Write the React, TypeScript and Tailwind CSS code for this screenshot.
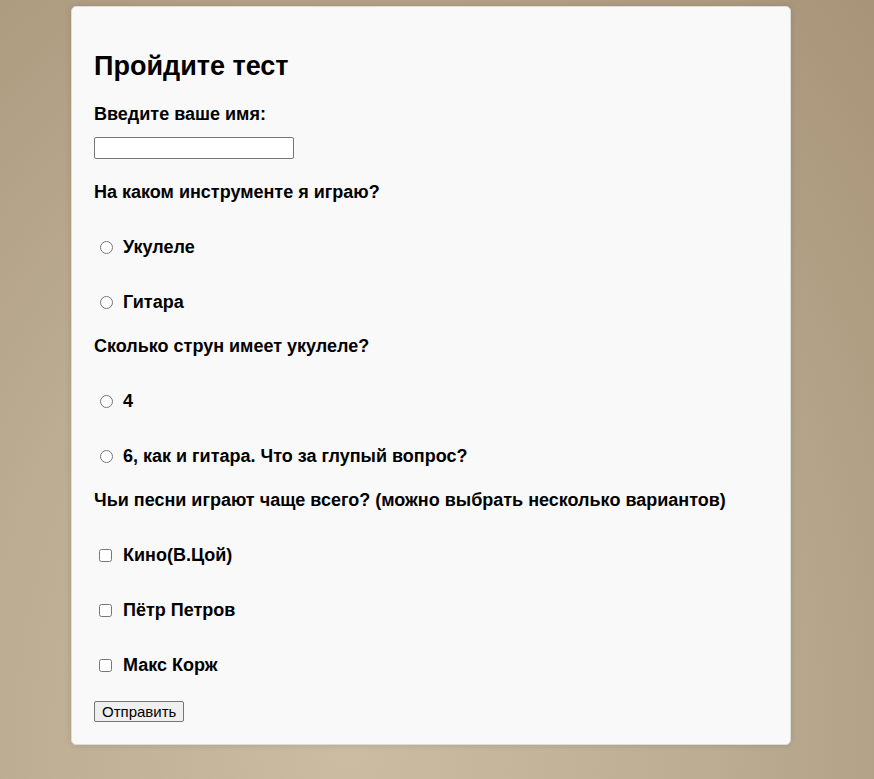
import { useState } from 'react';

interface Option {
  id: string;
  label: string;
}

const instruments: Option[] = [
  { id: 'ukulele', label: 'Укулеле' },
  { id: 'guitar', label: 'Гитара' },
];

const strings: Option[] = [
  { id: 'four', label: '4' },
  { id: 'six', label: '6, как и гитара. Что за глупый вопрос?' },
];

const artists: Option[] = [
  { id: 'kino', label: 'Кино(В.Цой)' },
  { id: 'petrov', label: 'Пётр Петров' },
  { id: 'korzh', label: 'Макс Корж' },
];

export default function App() {
  const [name, setName] = useState('');

  return (
    <div
      className="min-h-screen w-full pt-[6px] pb-[34px] bg-[radial-gradient(ellipse_at_40%_95%,#cbbca2_0%,#bbac92_50%,#a89478_100%)]"
      style={{ fontFamily: '"Liberation Sans", Arial, sans-serif' }}
    >
      <form
        className="ml-[71px] w-[720px] rounded-[5px] border border-[#dcdcdc] bg-[#f9f9f9] pl-[22px] pr-[23px] pt-[45px] pb-[22px] text-black shadow-[0_0_6px_rgba(0,0,0,0.12)]"
        onSubmit={(e) => e.preventDefault()}
      >
        <h2 className="text-[27px] font-bold leading-[28px]">Пройдите тест</h2>

        <label htmlFor="name" className="mt-[24px] block text-[18px] font-bold leading-[20px]">
          Введите ваше имя:
        </label>
        <input
          id="name"
          type="text"
          value={name}
          onChange={(e) => setName(e.target.value)}
          className="mt-[13px] block h-[22px] w-[200px] rounded-[2px] border border-[#767676] bg-white px-[2px] text-[15px]"
        />

        <p className="mt-[23px] text-[18px] font-bold leading-[20px]">На каком инструменте я играю?</p>
        {instruments.map((o) => (
          <label key={o.id} className="mt-[35px] flex h-[20px] items-center text-[18px] font-bold">
            <input type="radio" name="instrument" className="ml-[6px] mr-[10px] h-[13px] w-[13px]" />
            {o.label}
          </label>
        ))}

        <p className="mt-[24px] text-[18px] font-bold leading-[20px]">Сколько струн имеет укулеле?</p>
        {strings.map((o) => (
          <label key={o.id} className="mt-[35px] flex h-[20px] items-center text-[18px] font-bold">
            <input type="radio" name="strings" className="ml-[6px] mr-[10px] h-[13px] w-[13px]" />
            {o.label}
          </label>
        ))}

        <p className="mt-[24px] text-[18px] font-bold leading-[20px]">
          Чьи песни играют чаще всего? (можно выбрать несколько вариантов)
        </p>
        {artists.map((o) => (
          <label key={o.id} className="mt-[35px] flex h-[20px] items-center text-[18px] font-bold">
            <input type="checkbox" className="ml-[5px] mr-[11px] h-[13px] w-[13px]" />
            {o.label}
          </label>
        ))}

        <button
          type="submit"
          className="mt-[26px] block h-[21px] rounded-[2px] border border-[#767676] bg-[#efefef] px-[7px] text-[15px] leading-[19px]"
        >
          Отправить
        </button>
      </form>
    </div>
  );
}
